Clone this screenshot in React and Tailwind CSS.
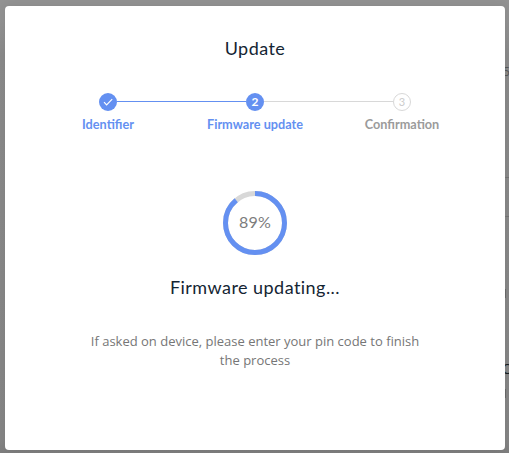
import React from 'react';

const steps = [
  { id: 1, label: 'Identifier', status: 'done' },
  { id: 2, label: 'Firmware update', status: 'active' },
  { id: 3, label: 'Confirmation', status: 'todo' },
];

const StepBadge = ({ step }) => {
  if (step.status === 'todo') {
    return (
      <span className="w-[18px] h-[18px] rounded-full border border-[#d8d8d8] text-[#cccccc] text-[11px] leading-[15px] text-center">
        {step.id}
      </span>
    );
  }

  return (
    <span className="w-[18px] h-[18px] rounded-full bg-[#6490f1] text-white text-[12px] font-bold leading-[17px] flex justify-center">
      {step.status === 'done' ? (
        <svg width="18" height="18" viewBox="0 0 18 18" fill="none" stroke="currentColor" strokeWidth="1.2">
          <path d="M5 9.2L7.6 11.8L13.2 6.2" />
        </svg>
      ) : (
        step.id
      )}
    </span>
  );
};

const Breadcrumb = () => (
  <div className="mt-[33px] flex font-['Lato',sans-serif]">
    {steps.map((step, i) => (
      <div key={step.id} className="w-[147px] flex flex-col items-center">
        <div className="w-full flex items-center">
          <span className={`flex-1 h-px -mt-px ${i === 0 ? 'bg-transparent' : i === 1 ? 'bg-[#6490f1]' : 'bg-[#d8d8d8]'}`} />
          <StepBadge step={step} />
          <span className={`flex-1 h-px -mt-px ${i === 0 ? 'bg-[#6490f1]' : i === 1 ? 'bg-[#d8d8d8]' : 'bg-transparent'}`} />
        </div>
        <span
          className={`mt-[5px] text-[12.7px] leading-4 font-bold whitespace-nowrap ${
            step.status === 'todo' ? 'text-[#9b9b9b]' : 'text-[#6490f1]'
          }`}
        >
          {step.label}
        </span>
      </div>
    ))}
  </div>
);

const Progress = ({ value }) => (
  <div className="mt-[59px] w-16 h-16 grid place-items-center">
    <svg className="col-start-1 row-start-1 -rotate-90" width="64" height="64" viewBox="0 0 64 64" fill="none" strokeWidth="5">
      <circle cx="32" cy="32" r="29.5" stroke="#d8d8d8" />
      <circle cx="32" cy="32" r="29.5" stroke="#6490f1" pathLength="100" strokeDasharray={`${value} 100`} />
    </svg>
    <span className="col-start-1 row-start-1 pb-[3px] font-['Lato',sans-serif] text-[16px] leading-5 tracking-[0.2px] text-[#7c7c7c]">{value}%</span>
  </div>
);

// Page content that stays visible behind the modal
const Backdrop = () => (
  <div className="w-1 h-[453px] shrink-0 overflow-hidden flex flex-col font-['Open_Sans',sans-serif] text-[12px] leading-4">
    <span className="mt-[64px] -ml-0.5 text-[#555555]">5</span>
    <span className="mt-[97px] h-px shrink-0 bg-[#717171]" />
    <span className="mt-[38px] h-px shrink-0 bg-[#717171]" />
    <span className="mt-[72px] h-[9px] w-px shrink-0 bg-[#666666]" />
    <span className="mt-[63px] -ml-[3px] text-[14px] text-[#161d22]">C</span>
    <span className="mt-[12px] h-[9px] w-px shrink-0 bg-[#666666]" />
  </div>
);

export default function App() {
  return (
    <div className="w-[509px] h-[453px] overflow-hidden flex pl-[5px] bg-[linear-gradient(to_bottom,#929292_0,#929292_20px,#8a8a8a_55px,#858585_440px,#7d7d7d_453px)]">
      <div className="mt-[6px] w-[500px] h-[444px] shrink-0 rounded bg-white flex flex-col items-center shadow-[0_0_8px_rgba(0,0,0,0.08)]">
        <h1 className="mt-[30px] font-['Lato',sans-serif] text-[18px] leading-6 tracking-[0.45px] text-[#142533]">Update</h1>
        <Breadcrumb />
        <Progress value={89} />
        <h2 className="mt-[20px] font-['Lato',sans-serif] text-[18px] leading-6 tracking-[0.45px] text-[#142533]">Firmware updating...</h2>
        <p className="mt-[33px] w-[340px] text-center font-['Open_Sans',sans-serif] text-[13px] leading-[19px] text-[#767676]">
          If asked on device, please enter your pin code to finish the process
        </p>
      </div>
      <Backdrop />
    </div>
  );
}
